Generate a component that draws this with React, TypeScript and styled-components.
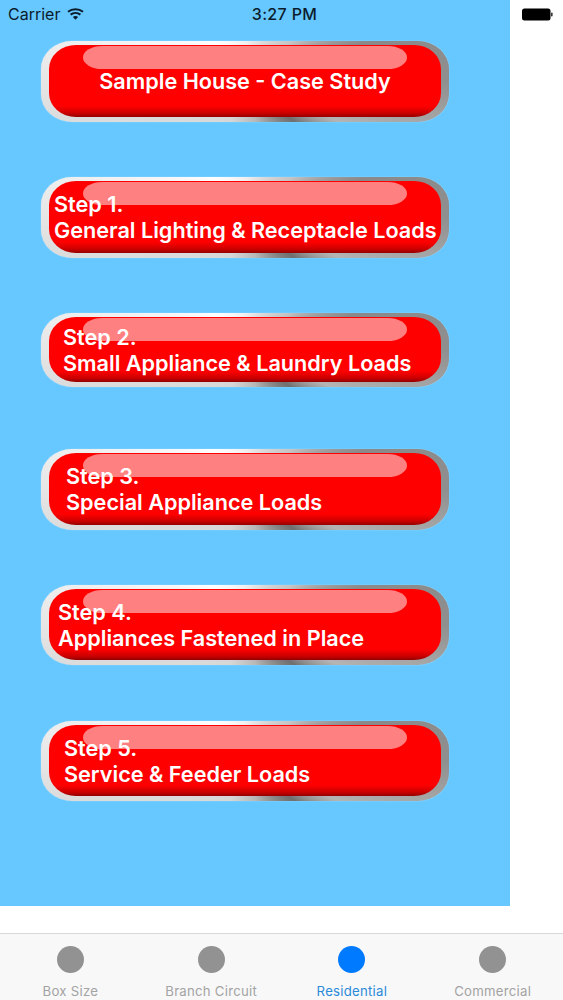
import React from "react";
import styled, { createGlobalStyle } from "styled-components";

const Global = createGlobalStyle`
  html, body { margin: 0; padding: 0; background: #fff; }
  body { font-family: Inter, "Liberation Sans", sans-serif; }
`;

const Page = styled.div`
  position: relative;
  width: 563px;
  height: 1000px;
  overflow: hidden;
  background: #fff;
  display: flex;
  flex-direction: column;
`;

const StatusBar = styled.div`
  position: absolute;
  inset: 0 0 auto 0;
  height: 28px;
  display: grid;
  grid-template-columns: 1fr auto 1fr;
  align-items: center;
  padding: 0 8px;
  font-size: 16px;
  color: #0b1b2b;
`;

const StatusLeft = styled.div`
  display: flex;
  align-items: center;
  gap: 7px;
`;

const StatusRight = styled.div`
  display: flex;
  justify-content: flex-end;
  padding-right: 2px;
`;

const Time = styled.div`
  font-weight: 500;
  letter-spacing: 0.35px;
  padding-left: 6px;
`;

const Panel = styled.main`
  width: 510px;
  height: 906px;
  box-sizing: border-box;
  background: #66c8ff;
  padding: 41px 0 0 41px;
  display: grid;
  grid-auto-rows: 136px;
  align-content: start;
  align-items: start;
`;

const Metal = styled.div<{ $h: number }>`
  position: relative;
  width: 408px;
  height: ${(p) => p.$h}px;
  box-sizing: border-box;
  padding: 4px 8px 5px;
  border-radius: 31px / 28px;
  background: conic-gradient(
    from 0deg at 50% 50%,
    #f0f0f0 0deg,
    #c4c4c4 50deg,
    #8a8a8a 72deg,
    #8f8f8f 90deg,
    #a4a4a4 101deg,
    #b4b4b4 113deg,
    #6f6f6f 129deg,
    #b8b8b8 165deg,
    #d6d6d6 200deg,
    #dcdcdc 259deg,
    #e6e6e6 270deg,
    #f4f4f4 290deg,
    #ffffff 320deg,
    #f0f0f0 360deg
  );
  box-shadow: 0 0 1px rgba(255, 255, 255, 0.8);
`;

const Red = styled.div<{ $pad: number; $center?: boolean }>`
  position: relative;
  height: 100%;
  box-sizing: border-box;
  border-radius: 27px / 24px;
  background: linear-gradient(to top, #940000 0, #cc0000 4px, #ff0000 11px);
  display: flex;
  flex-direction: column;
  justify-content: center;
  align-items: ${(p) => (p.$center ? "center" : "flex-start")};
  padding-left: ${(p) => p.$pad}px;
`;

const Gloss = styled.div`
  position: absolute;
  left: 34px;
  top: 1px;
  width: 324px;
  height: 23px;
  border-radius: 20px / 12px;
  background: rgba(255, 255, 255, 0.5);
`;

const Label = styled.div`
  position: relative;
  color: #fff;
  font-size: 21.65px;
  font-weight: 600;
  line-height: 26px;
  white-space: nowrap;
`;

const TabGap = styled.div`
  height: 27px;
  background: #fff;
`;

const TabBar = styled.nav`
  height: 67px;
  box-sizing: border-box;
  background: #f8f8f9;
  border-top: 1px solid #d9d9d9;
  display: grid;
  grid-template-columns: repeat(4, 1fr);
`;

const Tab = styled.div`
  display: flex;
  flex-direction: column;
  align-items: center;
  padding-top: 12px;
  gap: 10px;
`;

const Dot = styled.div<{ $active?: boolean }>`
  width: 27px;
  height: 27px;
  border-radius: 50%;
  background: ${(p) => (p.$active ? "#007aff" : "#929292")};
`;

const TabLabel = styled.div<{ $active?: boolean }>`
  font-size: 13.2px;
  line-height: 16px;
  letter-spacing: 0.25px;
  color: ${(p) => (p.$active ? "#2a8ad8" : "#a3a3a3")};
`;

const Wifi = () => (
  <svg width="17" height="12" viewBox="0 0 17 12" fill="none" aria-hidden="true">
    <path d="M1 3.8C5.2 0.3 11.8 0.3 16 3.8" stroke="#0b1b2b" strokeWidth="2" />
    <path d="M3.6 6.6C6.4 4.4 10.6 4.4 13.4 6.6" stroke="#0b1b2b" strokeWidth="2" />
    <path d="M5.9 8.9C7.4 7.6 9.6 7.6 11.1 8.9L8.5 11.8Z" fill="#0b1b2b" />
  </svg>
);

const Battery = () => (
  <svg width="31" height="13" viewBox="0 0 31 13" aria-hidden="true">
    <rect x="0" y="0.5" width="28.5" height="12" rx="2.5" fill="#000" />
    <rect x="29" y="4.5" width="1.6" height="4" rx="0.8" fill="#333" />
  </svg>
);

const buttons = [
  { lines: ["Sample House - Case Study"], h: 81, pad: 0, center: true },
  { lines: ["Step 1.", "General Lighting & Receptacle Loads"], h: 81, pad: 5 },
  { lines: ["Step 2.", "Small Appliance & Laundry Loads"], h: 74, pad: 14 },
  { lines: ["Step 3.", "Special Appliance Loads"], h: 81, pad: 17 },
  { lines: ["Step 4.", "Appliances Fastened in Place"], h: 80, pad: 9 },
  { lines: ["Step 5.", "Service & Feeder Loads"], h: 80, pad: 15 },
];

const tabs = ["Box Size", "Branch Circuit", "Residential", "Commercial"];

export default function App() {
  return (
    <Page>
      <Global />
      <Panel>
        {buttons.map((b) => (
          <Metal key={b.lines[0]} $h={b.h}>
            <Red $pad={b.pad} $center={b.center}>
              <Gloss />
              {b.lines.map((l) => (
                <Label key={l}>{l}</Label>
              ))}
            </Red>
          </Metal>
        ))}
      </Panel>
      <TabGap />
      <TabBar>
        {tabs.map((t) => (
          <Tab key={t}>
            <Dot $active={t === "Residential"} />
            <TabLabel $active={t === "Residential"}>{t}</TabLabel>
          </Tab>
        ))}
      </TabBar>
      <StatusBar>
        <StatusLeft>
          Carrier
          <Wifi />
        </StatusLeft>
        <Time>3:27 PM</Time>
        <StatusRight>
          <Battery />
        </StatusRight>
      </StatusBar>
    </Page>
  );
}
